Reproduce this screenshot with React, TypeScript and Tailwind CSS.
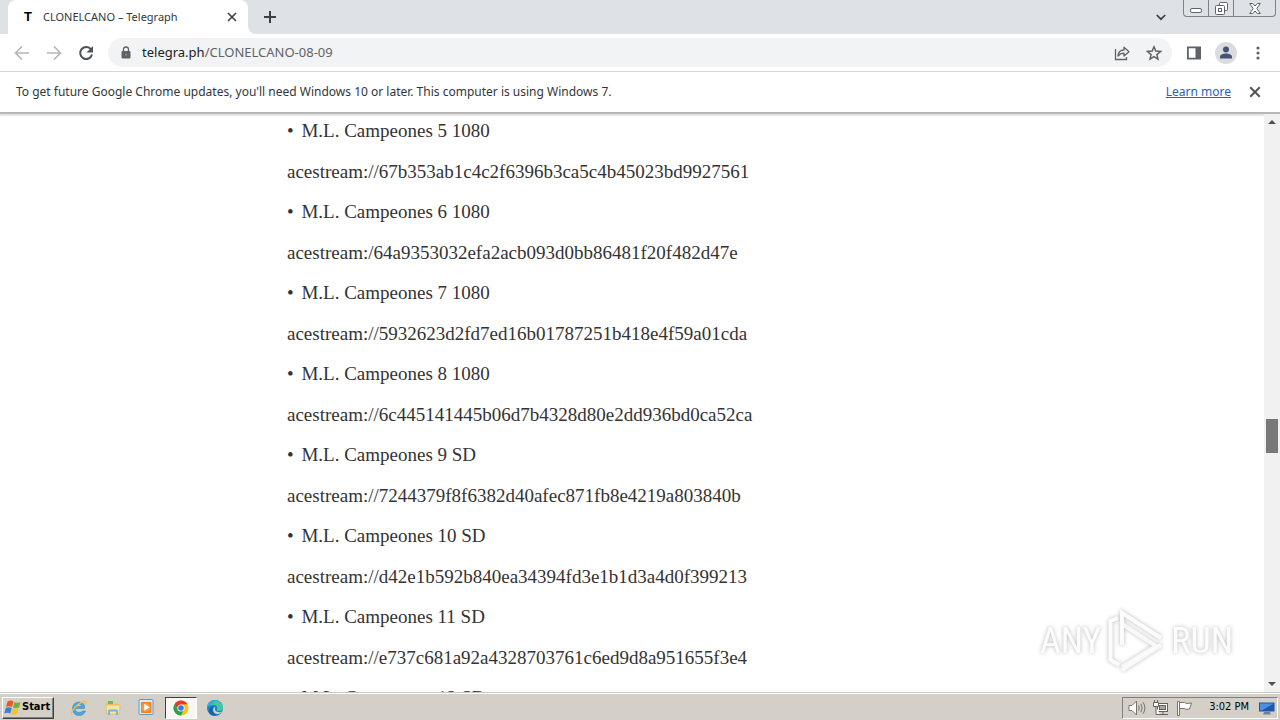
import React from "react";

type Entry = { title: string; link: string };

const entries: Entry[] = [
  { title: "M.L. Campeones 5 1080", link: "acestream://67b353ab1c4c2f6396b3ca5c4b45023bd9927561" },
  { title: "M.L. Campeones 6 1080", link: "acestream:/64a9353032efa2acb093d0bb86481f20f482d47e" },
  { title: "M.L. Campeones 7 1080", link: "acestream://5932623d2fd7ed16b01787251b418e4f59a01cda" },
  { title: "M.L. Campeones 8 1080", link: "acestream://6c445141445b06d7b4328d80e2dd936bd0ca52ca" },
  { title: "M.L. Campeones 9 SD", link: "acestream://7244379f8f6382d40afec871fb8e4219a803840b" },
  { title: "M.L. Campeones 10 SD", link: "acestream://d42e1b592b840ea34394fd3e1b1d3a4d0f399213" },
  { title: "M.L. Campeones 11 SD", link: "acestream://e737c681a92a4328703761c6ed9d8a951655f3e4" },
  { title: "M.L. Campeones 12 SD", link: "" },
];

function CloseIcon({ size }: { size: number }) {
  return (
    <svg width={size} height={size} viewBox="0 0 10 10" fill="none" stroke="currentColor" strokeWidth="1.6">
      <path d="M1 1l8 8M9 1L1 9" />
    </svg>
  );
}

function ArrowIcon({ flip = false }: { flip?: boolean }) {
  return (
    <svg width="16" height="16" viewBox="0 0 16 16" fill="none" stroke="currentColor" strokeWidth="1.7">
      {flip ? <path d="M1 8h13M8 1.5L14.500 8 8 14.500" /> : <path d="M15 8H2M8 1.500L1.500 8 8 14.500" />}
    </svg>
  );
}

function TabStrip() {
  return (
    <div className="flex h-[34px] shrink-0 items-stretch bg-[#dee1e6] pl-2">
      <div className="flex w-60 items-center rounded-t-lg bg-white pr-[11px] pl-[13px]">
        <span className="flex w-[14px] justify-center font-['Liberation_Sans'] text-[13px] font-bold text-black" aria-hidden="true">
          T
        </span>
        <span className="ml-2 flex-1 text-[11px] whitespace-nowrap">CLONELCANO – Telegraph</span>
        <button type="button" aria-label="Close tab" className="flex size-[10px] items-center justify-center text-[#3c4043]">
          <CloseIcon size={10} />
        </button>
      </div>
      <svg width="8" height="34" viewBox="0 0 8 34" className="shrink-0" aria-hidden="true">
        <path d="M0 26a8 8 0 0 0 8 8H0z" fill="#fff" />
      </svg>
      <button type="button" aria-label="New tab" className="ml-2 flex w-3 items-center justify-center text-[#3c4043]">
        <svg width="12" height="12" viewBox="0 0 12 12" stroke="currentColor" strokeWidth="2">
          <path d="M6 0v12M0 6h12" />
        </svg>
      </button>
      <div className="flex-1" />
      <button type="button" aria-label="Search tabs" className="mr-4 flex w-3 items-center justify-center text-[#3c4043]">
        <svg width="10" height="7" viewBox="0 0 10 7" fill="none" stroke="currentColor" strokeWidth="1.7">
          <path d="M.8 1L5 5.200 9.200 1" />
        </svg>
      </button>
      <div className="mr-1 flex h-[17px] rounded-b-[4px] border border-t-0 border-[#7d8188] text-[#5f6368]">
        <button type="button" aria-label="Minimize" className="flex w-[25px] items-center justify-center border-r border-[#7d8188]">
          <svg width="12" height="12" viewBox="0 0 12 12" fill="#fff" stroke="currentColor">
            <rect x=".5" y="6.500" width="11" height="4" rx="1.500" />
          </svg>
        </button>
        <button type="button" aria-label="Restore" className="flex w-[25px] items-center justify-center border-r border-[#7d8188]">
          <svg width="13" height="13" viewBox="0 0 13 13" fill="#fff" stroke="currentColor">
            <rect x="4.500" y=".5" width="8" height="8" rx="1" />
            <rect x=".5" y="3.500" width="9" height="9" rx="1" />
            <rect x="3.500" y="6.500" width="3" height="3" />
          </svg>
        </button>
        <button type="button" aria-label="Close window" className="flex w-[41px] items-center justify-center">
          <svg width="12" height="11" viewBox="0 0 12 11" fill="#fff" stroke="currentColor">
            <path d="M.7.500h3L6 3 8.300.500h3L7.800 5.500l3.500 5h-3L6 8l-2.300 2.500h-3l3.500-5z" />
          </svg>
        </button>
      </div>
    </div>
  );
}

function Toolbar() {
  return (
    <div className="flex h-[38px] shrink-0 items-center border-b border-[#d5d7da] bg-white pr-4 pl-[14px] text-[#5f6368]">
      <button type="button" aria-label="Back" className="text-[#b4b6b9]">
        <ArrowIcon />
      </button>
      <button type="button" aria-label="Forward" className="ml-4 text-[#b4b6b9]">
        <ArrowIcon flip />
      </button>
      <button type="button" aria-label="Reload" className="ml-4 text-[#505357]">
        <svg width="16" height="16" viewBox="0 0 16 16">
          <path d="M13.100 4.500A6 6 0 1 0 14 9.500" fill="none" stroke="currentColor" strokeWidth="2" />
          <path d="M15 1v6.500H8.500z" fill="currentColor" />
        </svg>
      </button>
      <div className="ml-[14px] flex h-[29px] flex-1 items-center rounded-full bg-[#f1f3f4] pr-[10px] pl-[13px]">
        <svg width="10" height="13" viewBox="0 0 10 13" aria-hidden="true">
          <rect x="0.500" y="5" width="9" height="7.500" rx="1" fill="currentColor" />
          <path d="M2.500 5.500V3.500a2.500 2.500 0 0 1 5 0v2" fill="none" stroke="currentColor" strokeWidth="1.300" />
          <circle cx="5" cy="8.700" r="1" fill="#8b8e91" />
        </svg>
        <div className="ml-[11px] flex-1 text-[13px] whitespace-nowrap text-[#5f6368]" role="textbox" aria-label="Address">
          <span className="text-[#202124]">telegra.ph</span>/CLONELCANO-08-09
        </div>
        <button type="button" aria-label="Share">
          <svg width="16" height="16" viewBox="0 0 16 16" fill="none" stroke="currentColor" strokeWidth="1.300">
            <path d="M1.500 4v10.500h11V12" />
            <path d="M4 11c.3-4 2.500-6 6-6V2.200L15 6.700l-5 4.300V8.200C7.500 8.200 5.500 9 4 11z" strokeLinejoin="round" />
          </svg>
        </button>
        <button type="button" aria-label="Bookmark this tab" className="ml-4">
          <svg width="16" height="16" viewBox="0 0 16 16" fill="none" stroke="currentColor" strokeWidth="1.500">
            <path d="M8 1.800l1.800 4.300 4.700.4-3.600 3.100 1.100 4.600L8 11.700l-4 2.500 1.100-4.600L1.500 6.500l4.700-.4z" />
          </svg>
        </button>
      </div>
      <button type="button" aria-label="Side panel" className="ml-[15px]">
        <svg width="14" height="14" viewBox="0 0 14 14">
          <path fillRule="evenodd" d="M0 .500h14v13H0zM1.800 2.300v9.400H8.500V2.300z" fill="currentColor" />
        </svg>
      </button>
      <button type="button" aria-label="Profile" className="ml-[14px]">
        <svg width="22" height="22" viewBox="0 0 22 22">
          <circle cx="11" cy="11" r="11" fill="#dadce0" />
          <circle cx="11" cy="7.500" r="3" fill="#465275" />
          <path d="M5 16.500v-1.700c0-2.300 3.500-3.300 6-3.300s6 1 6 3.300v1.700z" fill="#465275" />
        </svg>
      </button>
      <button type="button" aria-label="Menu" className="ml-[15px] flex w-[12px] justify-center">
        <svg width="4" height="14" viewBox="0 0 4 14" fill="currentColor">
          <circle cx="2" cy="2" r="1.600" />
          <circle cx="2" cy="7" r="1.600" />
          <circle cx="2" cy="12" r="1.600" />
        </svg>
      </button>
    </div>
  );
}

function InfoBar() {
  return (
    <div className="flex h-[42px] shrink-0 items-center border-b-2 border-[#b6b6b6] bg-white pr-[19px] pl-4 text-[12px] whitespace-nowrap">
      <p className="flex-1">
        To get future Google Chrome updates, you'll need Windows 10 or later. This computer is using Windows 7.
      </p>
      <a href="#learn" className="text-[#2a62b8] underline">
        Learn more
      </a>
      <button type="button" aria-label="Dismiss" className="ml-[18px] text-[#505357]">
        <CloseIcon size={12} />
      </button>
    </div>
  );
}

function Watermark() {
  return (
    <div
      className="pointer-events-none absolute right-[47px] bottom-[18px] flex h-[66px] items-center gap-[7px] font-['Liberation_Sans_Narrow','Roboto_Condensed','Roboto',sans-serif] text-[36px] leading-none text-[#fcfcfc] drop-shadow-[0_0_2px_rgba(0,0,0,0.28)]"
    >
      <span>ANY</span>
      <svg width="56" height="64" viewBox="0 0 56 64" fill="none" stroke="#fcfcfc" strokeWidth="4" aria-hidden="true">
        <path d="M10 9L2.500 12v40M14 36V4l39 25" />
        <path d="M14 36V15l34 22L14 58" strokeOpacity=".9" />
        <path d="M2.500 51l9 5M53 36L14 61" strokeOpacity=".9" />
      </svg>
      <span>RUN</span>
    </div>
  );
}

function PageScrollbar() {
  return (
    <div className="flex w-4 shrink-0 flex-col items-center bg-[#f1f1f1]" aria-hidden="true">
      <svg width="16" height="17" viewBox="0 0 16 17">
        <path d="M4 10l4-4 4 4z" fill="#505050" />
      </svg>
      <div className="flex-[288]" />
      <div className="h-[34px] w-3 bg-[#787878]" />
      <div className="flex-[222]" />
      <svg width="16" height="17" viewBox="0 0 16 17">
        <path d="M4 7l4 4 4-4z" fill="#505050" />
      </svg>
    </div>
  );
}

function Page() {
  return (
    <div className="relative flex min-h-0 flex-1 bg-white">
      <main className="min-w-0 flex-1 overflow-hidden shadow-[inset_0_2px_1px_#e4e4e4]">
        <article className="mx-auto max-w-[732px] px-[21px] pt-[3px] font-['Liberation_Serif',serif] text-[19px] leading-7 text-[#333333] oldstyle-nums">
          {entries.map((entry) => (
            <React.Fragment key={entry.title}>
              <p className="mb-[13px]">
                <span className="mr-[3px]">•</span> {entry.title}
              </p>
              <p className="mb-3">{entry.link}</p>
            </React.Fragment>
          ))}
        </article>
      </main>
      <PageScrollbar />
      <Watermark />
    </div>
  );
}

function Flag() {
  return (
    <svg width="18" height="17" viewBox="0 0 18 17" aria-hidden="true">
      <path d="M3.500 2.500q3-2 6 0L8 8q-3-1.500-6 0z" fill="#e85a20" />
      <path d="M10.500 3q3 1.500 6 0L15 8.500q-3 1.500-6 0z" fill="#6db33a" />
      <path d="M1.800 9q3-1.500 6 0l-1.500 5.500q-3-1.500-6 0z" fill="#3a7fd0" />
      <path d="M8.700 9.500q3 1.500 6 0L13.200 15q-3 1.500-6 0z" fill="#f5c32c" />
    </svg>
  );
}

function Taskbar() {
  return (
    <footer className="flex h-7 shrink-0 items-center border-t border-[#c9c7c2] bg-[#d4d0c8] px-[2px] pt-[2px] shadow-[inset_0_1px_0_#ffffff]">
      <button
        type="button"
        className="flex h-[22px] w-[52px] items-center border border-t-white border-r-[#404040] border-b-[#404040] border-l-white pl-px font-['DejaVu_Sans_Condensed','DejaVu_Sans',sans-serif] text-[11px] font-bold text-black shadow-[inset_-1px_-1px_0_#808080]"
      >
        <Flag />
        Start
      </button>
      <nav className="ml-4 flex items-center" aria-label="Pinned programs">
        <button type="button" aria-label="Internet Explorer">
          <svg width="18" height="18" viewBox="0 0 18 18" fill="none">
            <path d="M14.500 9.500H5q0 4 4 4 2.500 0 3.500-1.500h3q-1.800 4.500-6.500 4.500-6 0-6.500-7Q3 3 9 3q6 0 5.500 6.500zM5.200 7.500h6.500Q11.300 5 8.700 5 6 5 5.200 7.500z" fill="#4aa5e0" stroke="#2580c8" strokeWidth=".5" />
            <path d="M2 16q-2-2 3-7.500T15.500 2q1.500.5 0 3.500" stroke="#efc14a" strokeWidth="1.300" />
          </svg>
        </button>
        <button type="button" aria-label="Windows Explorer" className="ml-4">
          <svg width="18" height="18" viewBox="0 0 18 18">
            <path d="M2 3h5l1 1.500h7V14H2z" fill="#e9c766" />
            <path d="M4 2h5v3H4z" fill="#74b957" />
            <path d="M2 6h14l-.5 9h-13z" fill="#f8e3a0" stroke="#d7b65b" strokeWidth=".6" />
            <path d="M4 16v-4q0-1.500 1.500-1.500h7q1.500 0 1.500 1.500v4h-2v-3.500H6V16z" fill="#6fb5df" />
          </svg>
        </button>
        <button type="button" aria-label="Media Player" className="ml-4">
          <svg width="17" height="17" viewBox="0 0 17 17">
            <rect x="1" y=".5" width="14" height="15" rx="1" fill="#d8e9f7" stroke="#5b9bd0" />
            <rect x="3" y="3" width="10.500" height="11" rx="1" fill="#f08220" />
            <circle cx="8" cy="8.300" r="4.500" fill="#f59a3c" />
            <path d="M6.200 4.800v7l5.500-3.500z" fill="#fff" />
          </svg>
        </button>
        <button
          type="button"
          aria-label="Google Chrome"
          className="ml-[10px] flex h-[22px] w-8 items-center justify-center border border-t-[#404040] border-r-white border-b-white border-l-[#404040] bg-[#f8f7f5]"
        >
          <svg width="16" height="16" viewBox="0 0 16 16">
            <circle cx="8" cy="8" r="7.500" fill="#fbc116" />
            <path d="M1.500 4.250A7.500 7.500 0 0 1 14.500 4.250L8 4.500 4.900 9.800z" fill="#e33b2e" />
            <path d="M1.500 4.250A7.500 7.500 0 0 0 8 15.500L11.100 9.800 4.900 9.800z" fill="#2ba24c" />
            <circle cx="8" cy="8" r="3.600" fill="#fff" />
            <circle cx="8" cy="8" r="2.800" fill="#3a76e8" />
          </svg>
        </button>
        <button type="button" aria-label="Microsoft Edge" className="ml-[9px]">
          <svg width="18" height="18" viewBox="0 0 18 18">
            <circle cx="9" cy="9" r="8" fill="#1683cf" />
            <path d="M1.200 8A8 8 0 0 1 17 8.500q0 3.500-4 3.500-2.500 0-2-1.500Q12 6 7.500 6 3 6 1.200 8z" fill="#42c8a0" />
            <path d="M1.200 8A8 8 0 0 1 12 1.500Q7 2 5 6 2.500 6.500 1.200 8z" fill="#2baede" />
            <path d="M6.500 9q-1.500 5 4 7-6 1.500-7.500-3Q3 8.500 7.500 7z" fill="#1260a8" />
            <path d="M9.500 8q-1.500 3 1 4.500 3 1.500 5.500 0-2 3-5.500 2.500Q6 13.500 7.500 9z" fill="#d4d0c8" />
          </svg>
        </button>
      </nav>
      <div className="flex-1" />
      <div className="flex h-[22px] items-center border border-t-[#808080] border-r-white border-b-white border-l-[#808080] pr-[2px] pl-[5px]">
        <svg width="18" height="16" viewBox="0 0 18 16" fill="none" stroke="#77746e" aria-label="Volume" role="img">
          <path d="M1 5.500h3L8.500 1v14L4 10.500H1z" fill="#fff" />
          <path d="M10.500 5.500q1.500 2.500 0 5M12.800 3.800q2.700 4.200 0 8.400M15 2.200q3.800 5.800 0 11.600" />
        </svg>
        <svg width="18" height="16" viewBox="0 0 18 16" fill="none" stroke="#65625d" aria-label="Network" role="img" className="ml-[6px]">
          <rect x="5.500" y="3.500" width="10" height="8" fill="#fff" />
          <rect x="7.500" y="5.500" width="6" height="4" fill="#aaa7a0" />
          <path d="M8 14.500h8M11 12v2" />
          <path d="M1.500 2.500h5v4h-5zM2.500 0v2M5.500 0v2M4 6.500v8h4" fill="#fff" />
        </svg>
        <svg width="18" height="16" viewBox="0 0 18 16" fill="#fff" stroke="#77746e" aria-label="Action center" role="img" className="ml-[6px]">
          <path d="M1.500 1.500h2v14h-2zM3.500 2.500h5q1 1.500 7 .5l-2 6q-4 1-5.500-.5H3.500z" />
        </svg>
        <time className="ml-[15px] font-['DejaVu_Sans_Condensed','DejaVu_Sans',sans-serif] text-[11px] whitespace-nowrap text-black">3:02 PM</time>
        <svg width="16" height="14" viewBox="0 0 16 14" aria-hidden="true" className="ml-[10px]">
          <path d="M0 1.500h15.500v9H0z" fill="#1d56aa" />
          <path d="M1 2.500h13.500L3 9.500H1z" fill="#4b91dd" />
          <path d="M5 11h6l1 2.500H4z" fill="#6b8299" />
        </svg>
      </div>
    </footer>
  );
}

export default function App() {
  return (
    <div className="flex h-screen flex-col overflow-hidden bg-white font-['Noto_Sans',sans-serif] text-[#333639]">
      <TabStrip />
      <Toolbar />
      <InfoBar />
      <Page />
      <Taskbar />
    </div>
  );
}
